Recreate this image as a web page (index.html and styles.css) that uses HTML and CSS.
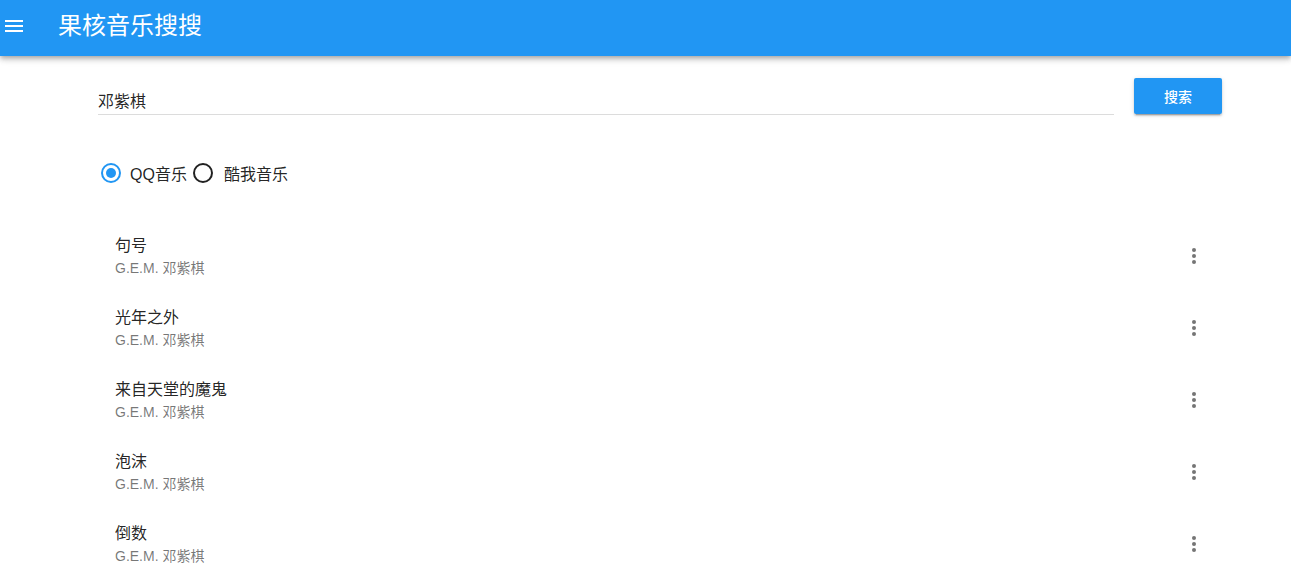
FILE: index.html
```html
<!DOCTYPE html>
<html lang="zh-CN">
<head>
    <meta charset="UTF-8">
    <title>果核音乐搜搜</title>
    <meta name="viewport" content="width=device-width, initial-scale=1.0">
    <link rel="stylesheet" href="styles.css">
</head>
<body>
    <header class="toolbar">
        <button class="menu-btn" aria-label="menu">
            <svg viewBox="0 0 24 24" width="24" height="24"><path d="M3 18h18v-2H3v2zm0-5h18v-2H3v2zm0-7v2h18V6H3z" fill="#fff"/></svg>
        </button>
        <div class="toolbar-title">果核音乐搜搜</div>
    </header>

    <main class="content">
        <div class="search-row">
            <div class="text-field">
                <input class="search-input" value="邓紫棋">
            </div>
            <button class="search-btn">搜索</button>
        </div>

        <div class="radio-group">
            <label class="radio">
                <span class="radio-mark checked"></span>
                <span class="radio-label">QQ音乐</span>
            </label>
            <label class="radio">
                <span class="radio-mark"></span>
                <span class="radio-label">酷我音乐</span>
            </label>
        </div>

        <ul class="song-list">
            <li class="song">
                <div class="song-text">
                    <div class="song-title">句号</div>
                    <div class="song-sub">G.E.M. 邓紫棋</div>
                </div>
                <span class="more"><i></i><i></i><i></i></span>
            </li>
            <li class="song">
                <div class="song-text">
                    <div class="song-title">光年之外</div>
                    <div class="song-sub">G.E.M. 邓紫棋</div>
                </div>
                <span class="more"><i></i><i></i><i></i></span>
            </li>
            <li class="song">
                <div class="song-text">
                    <div class="song-title">来自天堂的魔鬼</div>
                    <div class="song-sub">G.E.M. 邓紫棋</div>
                </div>
                <span class="more"><i></i><i></i><i></i></span>
            </li>
            <li class="song">
                <div class="song-text">
                    <div class="song-title">泡沫</div>
                    <div class="song-sub">G.E.M. 邓紫棋</div>
                </div>
                <span class="more"><i></i><i></i><i></i></span>
            </li>
            <li class="song">
                <div class="song-text">
                    <div class="song-title">倒数</div>
                    <div class="song-sub">G.E.M. 邓紫棋</div>
                </div>
                <span class="more"><i></i><i></i><i></i></span>
            </li>
        </ul>
    </main>
</body>
</html>
```

FILE: styles.css
```css
body {
    margin: 0;
    padding: 0;
    background: #fff;
    color: rgba(0,0,0,0.87);
    font-family: "Liberation Sans", "Noto Sans CJK SC", sans-serif;
    overflow: hidden;
}
.toolbar {
    height: 56px;
    background: #2196f3;
    display: flex;
    align-items: center;
    box-shadow: 0 2px 4px -1px rgba(0,0,0,0.2), 0 4px 5px 0 rgba(0,0,0,0.14), 0 1px 10px 0 rgba(0,0,0,0.12);
    position: relative;
}
.menu-btn {
    background: none;
    border: none;
    padding: 0;
    margin-left: 2px;
    margin-top: -4px;
    width: 24px;
    height: 24px;
    display: flex;
}
.toolbar-title {
    margin-left: 32px;
    color: #fff;
    font-size: 24px;
    font-weight: 400;
    line-height: 32px;
    margin-top: -4px;
}
.content {
    padding: 0 69px 0 98px;
}
.search-row {
    display: flex;
    margin-top: 22px;
    gap: 20px;
    align-items: flex-start;
}
.text-field {
    flex: 1;
    padding-top: 8px;
    border-bottom: 1px solid #dcdcdc;
}
.search-input {
    display: block;
    width: 100%;
    border: none;
    outline: none;
    padding: 0;
    height: 28px;
    font-size: 16px;
    font-family: "Liberation Sans", "Noto Sans CJK SC", sans-serif;
    color: rgba(0,0,0,0.87);
    background: transparent;
}
.search-btn {
    width: 88px;
    height: 36px;
    background: #2196f3;
    color: #fff;
    border: none;
    border-radius: 2px;
    font-size: 14px;
    font-weight: 500;
    font-family: "Liberation Sans", "Noto Sans CJK SC", sans-serif;
    box-shadow: 0 3px 1px -2px rgba(0,0,0,0.2), 0 2px 2px 0 rgba(0,0,0,0.14), 0 1px 5px 0 rgba(0,0,0,0.12);
}
.radio-group {
    display: flex;
    margin-top: 46px;
    height: 24px;
    align-items: center;
}
.radio {
    display: flex;
    align-items: center;
}
.radio-mark {
    width: 16px;
    height: 16px;
    border: 2px solid rgba(0,0,0,0.87);
    border-radius: 50%;
    margin-left: 3px;
    position: relative;
}
.radio-mark.checked {
    border-color: #2196f3;
}
.radio-mark.checked::after {
    content: "";
    position: absolute;
    left: 3px;
    top: 3px;
    width: 10px;
    height: 10px;
    border-radius: 50%;
    background: #2196f3;
}
.radio-label {
    font-size: 16px;
    margin-left: 9px;
    margin-right: 3px;
}
.radio + .radio .radio-label {
    margin-left: 11px;
}
.song-list {
    list-style: none;
    margin: 35px 0 0;
    padding: 0;
}
.song {
    height: 72px;
    display: flex;
    align-items: center;
    padding: 0 16px 0 17px;
}
.song-text {
    flex: 1;
}
.song-title {
    font-size: 16px;
    line-height: 24px;
}
.song-sub {
    font-size: 14px;
    line-height: 20px;
    color: rgba(0,0,0,0.54);
}
.more {
    width: 24px;
    height: 24px;
    display: flex;
    flex-direction: column;
    align-items: center;
    justify-content: center;
    gap: 2px;
}
.more i {
    width: 4px;
    height: 4px;
    border-radius: 50%;
    background: #757575;
}
```
